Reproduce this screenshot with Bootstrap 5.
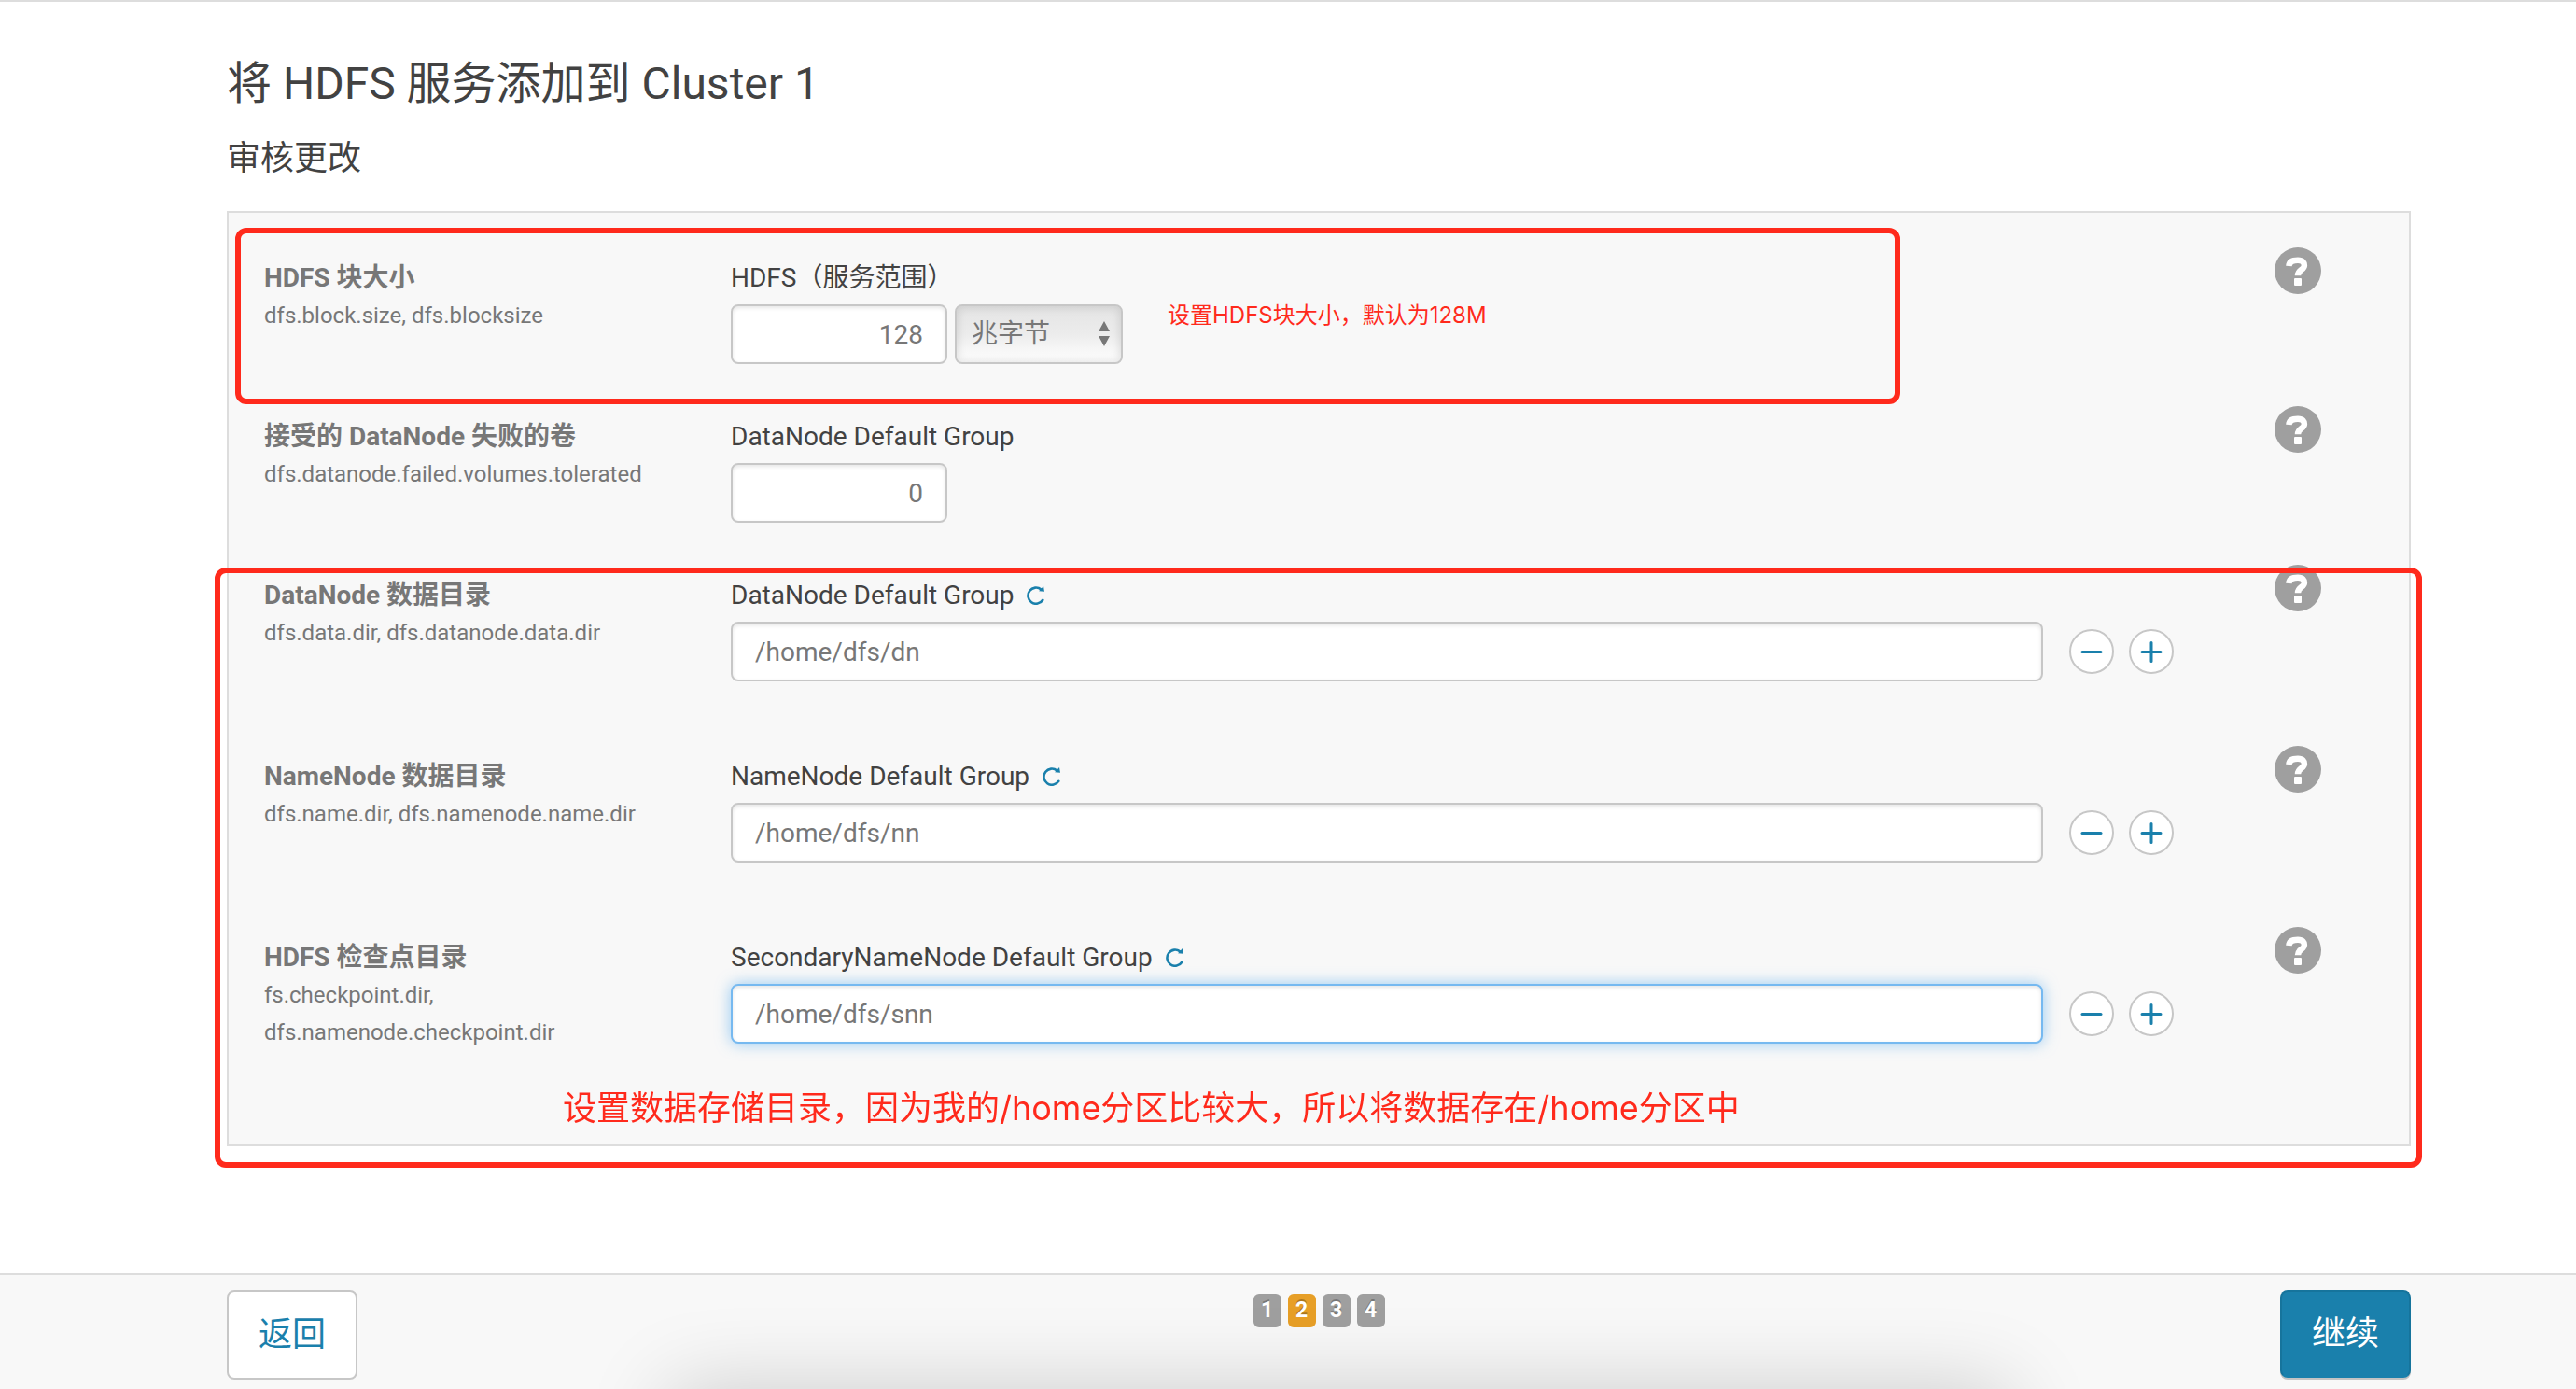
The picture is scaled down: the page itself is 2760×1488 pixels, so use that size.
<!DOCTYPE html>
<html lang="zh-CN">
<head>
<meta charset="utf-8">
<meta name="viewport" content="width=device-width, initial-scale=1">
<title>将 HDFS 服务添加到 Cluster 1</title>
<link href="https://cdn.jsdelivr.net/npm/bootstrap@5.3.0/dist/css/bootstrap.min.css" rel="stylesheet">
<style>
  :root { --ink: #424242; --soft: #777; --line: #ddd; --edge: #c7c7c7; --brand: #1a80ac; --note: #ff2a1c; }
  body { font-family: Roboto, "Noto Sans CJK SC", sans-serif; font-size: 28px; line-height: 40px; color: var(--ink); background: #fff; border-top: 2px solid var(--line); }
  .wizard-width { padding: 0 177px 0 243px; }
  .wizard-main { padding-top: 58px; }
  .wizard-title { font-size: 48px; line-height: 60px; font-weight: 400; margin: 0 0 26px; }
  .wizard-step { font-size: 36px; line-height: 48px; font-weight: 400; margin: 0 0 32px; }
  .review-panel { background: #f8f8f8; border: 2px solid var(--line); padding: 50px 94px 18px 38px; }
  .setting { padding-bottom: 58px; }
  .setting-dir { padding-bottom: 82px; }
  .setting-name { width: 500px; flex: none; padding-right: 90px; color: var(--soft); }
  .setting-name b { font-weight: 700; display: block; }
  .setting-name span { font-size: 24px; display: block; }
  .setting-name b, .setting-field label { height: 40px; }
  .setting-field { min-width: 0; }
  .setting-field label { display: block; }
  .field-input { height: 64px; padding: 0 24px; font-size: 28px; color: var(--soft); background: #fff; border: 2px solid var(--edge); border-radius: 8px; box-shadow: inset 0 2px 4px rgba(0,0,0,.1); }
  .field-input:focus { color: var(--soft); border-color: #76b9f0; box-shadow: inset 0 2px 4px rgba(0,0,0,.1), 0 0 16px rgba(82,168,236,.6); }
  .field-number { width: 232px; text-align: right; }
  .field-path { max-width: 1406px; margin-right: 12px; }
  .unit-select { display: block; width: 180px; height: 64px; padding: 0 16px; font-size: 28px; color: var(--soft); border: 2px solid var(--edge); border-radius: 8px; appearance: none; background: linear-gradient(#e4e4e4, #ececec 50%, #fff); box-shadow: inset 0 0 8px 2px rgba(0,0,0,.1); }
  .unit-arrows { right: 13px; top: 18px; pointer-events: none; }
  .round-btn { width: 48px; height: 48px; padding: 0; border: 2px solid var(--edge); border-radius: 50%; background: #fff; flex: none; }
  .help-btn { width: 50px; height: 50px; padding: 0; border: 0; background: none; flex: none; margin-top: -13px; }
  .bare-btn { padding: 0; border: 0; background: none; }
  .label-line { gap: 14px; }
  .marker { border: 6px solid var(--note); border-radius: 12px; pointer-events: none; }
  .marker-size { left: 7px; right: 545px; top: 16px; height: 189px; }
  .marker-dirs { left: -15px; right: -14px; top: 380px; bottom: -25px; }
  .note-text { color: var(--note); font-family: Inter, "Noto Sans CJK SC", sans-serif; white-space: nowrap; }
  .note-size { left: 1006px; top: 90px; font-size: 24px; }
  .note-dirs { left: 358px; bottom: 19px; font-size: 36px; }
  .wizard-footer { border-top: 2px solid var(--line); background: #f8f8f8; padding: 16px 0 10px; overflow: hidden; }
  .wizard-footer::after { content: ""; position: absolute; left: 26%; right: 22%; top: 100%; height: 200px; box-shadow: 0 0 90px rgba(0,0,0,.18); pointer-events: none; }
  .nav-btn { width: 140px; height: 96px; font-size: 36px; border: 2px solid var(--edge); border-radius: 8px; background: #fff; color: var(--brand); padding: 0; }
  .nav-btn-go { height: 94px; background: var(--brand); border-color: #16749c; border-bottom-color: var(--brand); color: #fff; box-shadow: 0 2px 0 #c4c4c4; }
  .pager { gap: 7px; padding-top: 4px; }
  .pager-step { width: 30px; height: 36px; line-height: 36px; border-radius: 6px; background: #9f9f9f; color: #fff; font-size: 23px; font-weight: 700; text-align: center; text-shadow: 0 -2px 0 rgba(0,0,0,.25); }
  .pager-step.current { background: #e79f27; }
</style>
<script src="https://cdn.jsdelivr.net/npm/bootstrap@5.3.0/dist/js/bootstrap.bundle.min.js"></script>
</head>
<body class="d-flex flex-column min-vh-100">
<svg class="d-none" xmlns="http://www.w3.org/2000/svg">
  <symbol id="i-help" viewBox="0 0 50 50"><circle cx="25" cy="25" r="25" fill="#9f9f9f"/><path fill="none" stroke="#fff" stroke-width="6.5" d="M15.4 20c.3-4.800 4.300-6.200 9.600-6.200 5.500 0 6.900 3 6.900 5.500 0 5.200-6.900 4.200-6.900 11"/><rect x="21" y="33" width="8" height="8" rx="1" fill="#fff"/></symbol>
  <symbol id="i-minus" viewBox="0 0 44 44"><path d="M12 22.500h20" stroke="#1a80ac" stroke-width="3" stroke-linecap="round"/></symbol>
  <symbol id="i-plus" viewBox="0 0 44 44"><path d="M12 22.500h20M22 12.500v20" stroke="#1a80ac" stroke-width="3" stroke-linecap="round"/></symbol>
  <symbol id="i-reset" viewBox="0 0 20 20"><path d="M17.300 14.800A8.600 8.600 0 1 1 15.500 3.500" fill="none" stroke="#1a80ac" stroke-width="2.600" stroke-linecap="round"/><path d="M18 0l1 5.800-6-.6z" fill="#1a80ac"/></symbol>
</svg>

<main class="wizard-width wizard-main">
  <h1 class="wizard-title">将 HDFS 服务添加到 Cluster 1</h1>
  <h2 class="wizard-step">审核更改</h2>

  <form class="review-panel position-relative">
    <div class="setting d-flex">
      <div class="setting-name"><b>HDFS 块大小</b><span>dfs.block.size, dfs.blocksize</span></div>
      <div class="setting-field flex-grow-1">
        <label class="mb-2" for="block">HDFS（服务范围）</label>
        <div class="d-flex gap-2">
          <input class="form-control field-input field-number" id="block" type="text" value="128">
          <div class="position-relative">
            <select class="unit-select" aria-label="单位"><option>兆字节</option></select>
            <svg class="unit-arrows position-absolute" width="14" height="28" viewBox="0 0 14 28"><path d="M1 11 7 0l6 11zM1 16h12L7 27z" fill="#777"/></svg>
          </div>
        </div>
      </div>
      <button class="help-btn" type="button" aria-label="帮助"><svg class="d-block" width="50" height="50"><use href="#i-help"/></svg></button>
    </div>

    <div class="setting d-flex">
      <div class="setting-name"><b>接受的 DataNode 失败的卷</b><span>dfs.datanode.failed.volumes.tolerated</span></div>
      <div class="setting-field flex-grow-1">
        <label class="mb-2" for="volumes">DataNode Default Group</label>
        <input class="form-control field-input field-number" id="volumes" type="text" value="0">
      </div>
      <button class="help-btn" type="button" aria-label="帮助"><svg class="d-block" width="50" height="50"><use href="#i-help"/></svg></button>
    </div>

    <div class="setting setting-dir d-flex">
      <div class="setting-name"><b>DataNode 数据目录</b><span>dfs.data.dir, dfs.datanode.data.dir</span></div>
      <div class="setting-field flex-grow-1">
        <div class="d-flex align-items-center mb-2 label-line"><label for="dn">DataNode Default Group</label><button class="bare-btn d-flex" type="button" aria-label="重置"><svg width="20" height="20"><use href="#i-reset"/></svg></button></div>
        <div class="d-flex align-items-center gap-3">
          <input class="form-control field-input field-path" id="dn" type="text" value="/home/dfs/dn">
          <button class="round-btn" type="button" aria-label="删除"><svg class="d-block" width="44" height="44"><use href="#i-minus"/></svg></button>
          <button class="round-btn" type="button" aria-label="添加"><svg class="d-block" width="44" height="44"><use href="#i-plus"/></svg></button>
        </div>
      </div>
      <button class="help-btn" type="button" aria-label="帮助"><svg class="d-block" width="50" height="50"><use href="#i-help"/></svg></button>
    </div>

    <div class="setting setting-dir d-flex">
      <div class="setting-name"><b>NameNode 数据目录</b><span>dfs.name.dir, dfs.namenode.name.dir</span></div>
      <div class="setting-field flex-grow-1">
        <div class="d-flex align-items-center mb-2 label-line"><label for="nn">NameNode Default Group</label><button class="bare-btn d-flex" type="button" aria-label="重置"><svg width="20" height="20"><use href="#i-reset"/></svg></button></div>
        <div class="d-flex align-items-center gap-3">
          <input class="form-control field-input field-path" id="nn" type="text" value="/home/dfs/nn">
          <button class="round-btn" type="button" aria-label="删除"><svg class="d-block" width="44" height="44"><use href="#i-minus"/></svg></button>
          <button class="round-btn" type="button" aria-label="添加"><svg class="d-block" width="44" height="44"><use href="#i-plus"/></svg></button>
        </div>
      </div>
      <button class="help-btn" type="button" aria-label="帮助"><svg class="d-block" width="50" height="50"><use href="#i-help"/></svg></button>
    </div>

    <div class="setting setting-dir d-flex">
      <div class="setting-name"><b>HDFS 检查点目录</b><span>fs.checkpoint.dir, dfs.namenode.checkpoint.dir</span></div>
      <div class="setting-field flex-grow-1">
        <div class="d-flex align-items-center mb-2 label-line"><label for="snn">SecondaryNameNode Default Group</label><button class="bare-btn d-flex" type="button" aria-label="重置"><svg width="20" height="20"><use href="#i-reset"/></svg></button></div>
        <div class="d-flex align-items-center gap-3">
          <input class="form-control field-input field-path" id="snn" type="text" value="/home/dfs/snn" autofocus>
          <button class="round-btn" type="button" aria-label="删除"><svg class="d-block" width="44" height="44"><use href="#i-minus"/></svg></button>
          <button class="round-btn" type="button" aria-label="添加"><svg class="d-block" width="44" height="44"><use href="#i-plus"/></svg></button>
        </div>
      </div>
      <button class="help-btn" type="button" aria-label="帮助"><svg class="d-block" width="50" height="50"><use href="#i-help"/></svg></button>
    </div>

    <div class="marker marker-size position-absolute"></div>
    <div class="marker marker-dirs position-absolute"></div>
    <div class="note-text note-size position-absolute">设置HDFS块大小，默认为128M</div>
    <div class="note-text note-dirs position-absolute">设置数据存储目录，因为我的/home分区比较大，所以将数据存在/home分区中</div>
  </form>
</main>

<footer class="wizard-footer position-relative mt-auto">
  <div class="wizard-width d-flex justify-content-between align-items-start">
    <button class="nav-btn" type="button">返回</button>
    <div class="pager d-flex">
      <span class="pager-step">1</span><span class="pager-step current">2</span><span class="pager-step">3</span><span class="pager-step">4</span>
    </div>
    <button class="nav-btn nav-btn-go" type="button">继续</button>
  </div>
</footer>
</body>
</html>
